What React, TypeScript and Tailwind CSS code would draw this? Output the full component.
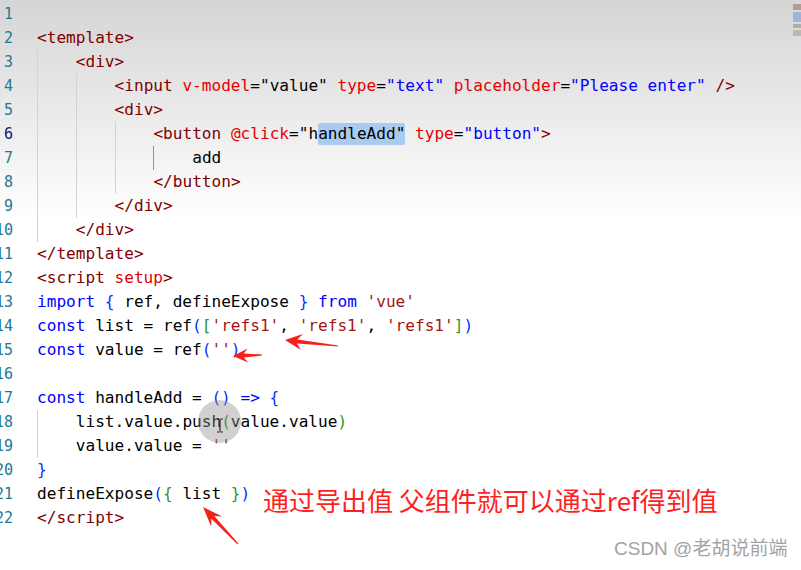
import React from 'react';

type Tok = [string, string];

const T = '#800000';
const A = '#e50000';
const S = '#0000ff';
const K = '#0000ff';
const D = '#000000';
const R = '#a31515';
const B1 = '#0431fa';
const B2 = '#319331';
const SEL = 'sel';

const lines: { ind: number; toks: Tok[] }[] = [
  { ind: 0, toks: [] },
  { ind: 0, toks: [[T, '<template>']] },
  { ind: 1, toks: [[T, '<div>']] },
  {
    ind: 2,
    toks: [
      [T, '<input '], [A, 'v-model'], [D, '="value" '], [A, 'type'], [D, '='], [S, '"text"'], [D, ' '],
      [A, 'placeholder'], [D, '='], [S, '"Please enter"'], [D, ' '], [T, '/>'],
    ],
  },
  { ind: 2, toks: [[T, '<div>']] },
  {
    ind: 3,
    toks: [
      [T, '<button '], [A, '@click'], [D, '="h'], [SEL, 'andleAdd"'], [D, ' '], [A, 'type'], [D, '='],
      [S, '"button"'], [T, '>'],
    ],
  },
  { ind: 4, toks: [[D, 'add']] },
  { ind: 3, toks: [[T, '</button>']] },
  { ind: 2, toks: [[T, '</div>']] },
  { ind: 1, toks: [[T, '</div>']] },
  { ind: 0, toks: [[T, '</template>']] },
  { ind: 0, toks: [[T, '<script '], [A, 'setup'], [T, '>']] },
  {
    ind: 0,
    toks: [[K, 'import'], [D, ' '], [B1, '{'], [D, ' ref, defineExpose '], [B1, '}'], [D, ' '], [K, 'from'], [D, ' '], [R, "'vue'"]],
  },
  {
    ind: 0,
    toks: [
      [K, 'const'], [D, ' list = ref'], [B1, '('], [B2, '['], [R, "'refs1'"], [D, ', '], [R, "'refs1'"], [D, ', '],
      [R, "'refs1'"], [B2, ']'], [B1, ')'],
    ],
  },
  { ind: 0, toks: [[K, 'const'], [D, ' value = ref'], [B1, '('], [R, "''"], [B1, ')']] },
  { ind: 0, toks: [] },
  { ind: 0, toks: [[K, 'const'], [D, ' handleAdd = '], [B1, '()'], [D, ' '], [K, '=>'], [D, ' '], [B1, '{']] },
  { ind: 1, toks: [[D, 'list.value.push'], [B2, '('], [D, 'value.value'], [B2, ')']] },
  { ind: 1, toks: [[D, 'value.value = '], [R, "''"]] },
  { ind: 0, toks: [[B1, '}']] },
  { ind: 0, toks: [[D, 'defineExpose'], [B1, '('], [B2, '{'], [D, ' list '], [B2, '}'], [B1, ')']] },
  { ind: 0, toks: [[T, '</script>']] },
];

// arrow polygon from tip to tail
function arrowPoints(tip: [number, number], tail: [number, number], headLen: number, headW: number, shaftW: number) {
  const dx = tail[0] - tip[0];
  const dy = tail[1] - tip[1];
  const len = Math.hypot(dx, dy);
  const ux = dx / len;
  const uy = dy / len;
  const px = -uy;
  const py = ux;
  const base = [tip[0] + ux * headLen, tip[1] + uy * headLen];
  const notch = [tip[0] + ux * headLen * 0.72, tip[1] + uy * headLen * 0.72];
  const pts = [
    tip,
    [base[0] + (px * headW) / 2, base[1] + (py * headW) / 2],
    [notch[0] + (px * shaftW) / 2, notch[1] + (py * shaftW) / 2],
    [tail[0] + px * 0.6, tail[1] + py * 0.6],
    [tail[0] - px * 0.6, tail[1] - py * 0.6],
    [notch[0] - (px * shaftW) / 2, notch[1] - (py * shaftW) / 2],
    [base[0] - (px * headW) / 2, base[1] - (py * headW) / 2],
  ];
  return pts.map((p) => `${p[0].toFixed(1)},${p[1].toFixed(1)}`).join(' ');
}

function CodeLine({ n, ind, toks }: { n: number; ind: number; toks: Tok[] }) {
  return (
    <div className="flex h-[24px] items-stretch">
      <div className={`flex w-[13px] shrink-0 items-center justify-end text-[15px] ${n === 6 ? 'text-[#0b216f]' : 'text-[#237893]'}`}>
        {n}
      </div>
      <div className="ml-[24px] flex items-stretch">
        {Array.from({ length: ind }).map((_, i) => (
          <span
            key={i}
            className={`w-[38.8px] shrink-0 border-l ${n === 7 && i === 3 ? 'border-[#939393]' : 'border-[#d3d3d3]'}`}
          />
        ))}
        <span className="flex items-center whitespace-pre">
          {toks.map(([c, t], i) =>
            c === SEL ? (
              <span key={i} className="flex h-[22px] items-center rounded-[2px] bg-[#a9cbf0] text-black">
                {t}
              </span>
            ) : (
              <span key={i} style={{ color: c }}>
                {t}
              </span>
            )
          )}
        </span>
      </div>
    </div>
  );
}

export default function App() {
  return (
    <div className="relative h-[570px] w-[801px] overflow-hidden bg-[linear-gradient(180deg,#d5d5d5_0px,#e6e6e6_90px,#ffffff_220px)] pt-[2px] font-['DejaVu_Sans_Mono',monospace] text-[16.1px]">
      {lines.map((l, i) => (
        <CodeLine key={i} n={i + 1} ind={l.ind} toks={l.toks} />
      ))}

      {/* minimap thumbnail in the corner */}
      <div className="absolute right-0 top-[4px] flex w-[8px] flex-col gap-[2px] opacity-70">
        <div className="h-[6px] bg-[#a0857a]" />
        <div className="h-[10px] bg-[#8ea0d8]" />
        <div className="h-[4px] bg-[#9a9a9a]" />
        <div className="h-[6px] bg-[#b0a8a0]" />
      </div>

      {/* cursor highlight */}
      <div className="absolute left-[198px] top-[400px] h-[43px] w-[43px] rounded-full bg-[#8c8c8c]/40" />
      <svg className="absolute left-[216px] top-[418px]" width="8" height="15" viewBox="0 0 8 15">
        <path d="M1 1h2.5M4.5 1H7M4 1.5v12M1 14h2.5M4.5 14H7" stroke="#222" strokeWidth="1.2" fill="none" />
      </svg>

      {/* red arrows */}
      <svg className="absolute left-0 top-0" width="801" height="570">
        <polygon points={arrowPoints([285, 340], [338, 346], 17, 16, 4)} fill="#f5221b" />
        <polygon points={arrowPoints([233, 356], [262, 355], 15, 14, 4)} fill="#f5221b" />
        <polygon points={arrowPoints([203, 507], [238, 544], 20, 15, 4)} fill="#f5221b" />
      </svg>

      <div className="absolute left-[263px] top-[484px] whitespace-nowrap font-['Noto_Sans_CJK_SC',sans-serif] text-[26px] leading-[32px] text-[#ff1f1f]">
        通过导出值 父组件就可以通过ref得到值
      </div>

      <div className="absolute left-[614px] top-[537px] whitespace-nowrap font-['Liberation_Sans','Noto_Sans_CJK_SC',sans-serif] text-[19px] leading-[24px] text-[#a3a3a3]">
        CSDN @老胡说前端
      </div>
    </div>
  );
}
